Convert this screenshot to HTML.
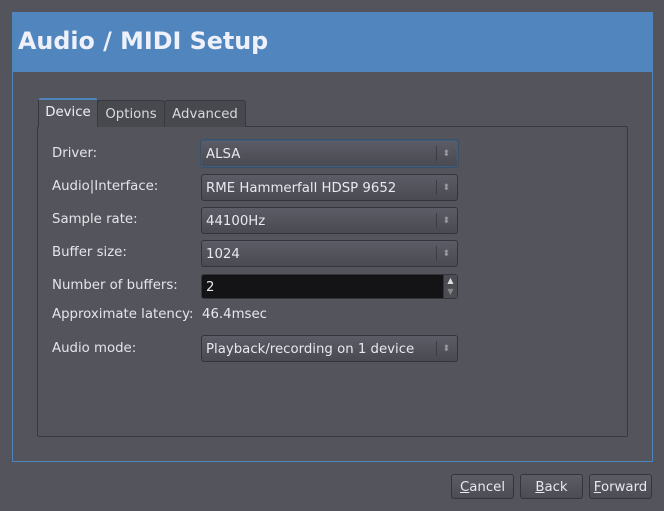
<!DOCTYPE html>
<html><head><style>
*{box-sizing:border-box;margin:0;padding:0}
body{width:664px;height:511px;background:#54545c;font-family:"DejaVu Sans",sans-serif;font-size:13.3px;color:#e8e8ee;position:relative;overflow:hidden}
.abs{position:absolute}
.frame{left:12px;top:12px;width:641px;height:450px;border:1px solid #5084bc}
.hdr{left:12px;top:12px;width:641px;height:60px;background:#5086bd}
.title{left:18px;top:27px;font-size:23.8px;font-weight:bold;color:#eef0fa}
.panel{left:37px;top:126px;width:591px;height:311px;border:1px solid #38383e;border-radius:2px}
.tab{top:100px;height:27px;border:1px solid #38383e;border-bottom:none;background:#48484f;border-radius:3px 3px 0 0;color:#d8d8e0;text-align:center;line-height:27px}
.tab.act{top:98px;height:29px;background:#54545c;border-top:2px solid #5084bc;color:#f0f0f4;line-height:26px}
.lbl{left:52px;color:#e4e4ea}
.cb{left:201px;width:257px;height:27px;border:1px solid #34343a;border-radius:3px;background:linear-gradient(#5c5c66,#4a4a52);padding-left:4px;line-height:27px}
.cb:after{content:"";position:absolute;right:20px;top:5px;height:15px;border-left:1px solid #3c3c44}
.cb span{position:absolute;right:7px;top:0;font-size:9px;color:#9a9aa4}
.btn{top:474px;height:25px;border:1px solid #34343a;border-radius:3px;background:linear-gradient(#5c5c66,#4c4c54);text-align:center;line-height:25px}
u{text-decoration:underline}
</style></head><body>
<div class="abs frame"></div>
<div class="abs hdr"></div>
<div class="abs title">Audio / MIDI Setup</div>
<div class="abs panel"></div>
<div class="abs tab" style="left:97px;width:68px">Options</div>
<div class="abs tab" style="left:164px;width:82px">Advanced</div>
<div class="abs tab act" style="left:38px;width:60px">Device</div>

<div class="abs lbl" style="top:146px">Driver:</div>
<div class="abs cb" style="top:140px;border-color:#3e5e80;box-shadow:0 0 0 1px #3a4f68">ALSA<span>⬍</span></div>
<div class="abs lbl" style="top:179px">Audio|Interface:</div>
<div class="abs cb" style="top:174px">RME Hammerfall HDSP 9652<span>⬍</span></div>
<div class="abs lbl" style="top:212px">Sample rate:</div>
<div class="abs cb" style="top:207px">44100Hz<span>⬍</span></div>
<div class="abs lbl" style="top:245px">Buffer size:</div>
<div class="abs cb" style="top:240px">1024<span>⬍</span></div>
<div class="abs lbl" style="top:278px">Number of buffers:</div>
<div class="abs" style="left:201px;top:274px;width:257px;height:25px;border:1px solid #34343a;border-radius:3px;background:#141416;padding-left:4px;line-height:25px">2
<div class="abs" style="right:0;top:0;width:14px;height:23px;background:#4c4c54;border-left:1px solid #34343a;font-size:8px;text-align:center;line-height:11px;color:#ddd">▲<br><span style="color:#888">▼</span></div></div>
<div class="abs lbl" style="top:307px">Approximate latency:</div>
<div class="abs" style="left:202px;top:307px">46.4msec</div>
<div class="abs lbl" style="top:341px">Audio mode:</div>
<div class="abs cb" style="top:335px">Playback/recording on 1 device<span>⬍</span></div>

<div class="abs btn" style="left:451px;width:63px"><u>C</u>ancel</div>
<div class="abs btn" style="left:520px;width:63px"><u>B</u>ack</div>
<div class="abs btn" style="left:589px;width:63px"><u>F</u>orward</div>
</body></html>
